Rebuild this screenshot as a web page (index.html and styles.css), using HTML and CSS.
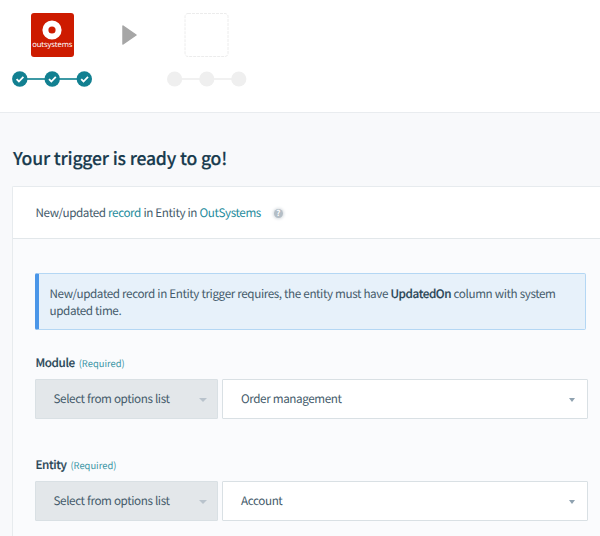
FILE: index.html
```html
<!DOCTYPE html>
<html lang="en">
<head>
<meta charset="utf-8">
<title>Trigger setup</title>
<link rel="stylesheet" href="styles.css">
</head>
<body>
<header class="steps">
  <div class="step">
    <div class="logo">
      <svg width="20" height="20" viewBox="0 0 20 20"><circle cx="10" cy="10" r="6.6" fill="none" stroke="#fff" stroke-width="6"/></svg>
      <span class="logo-name">outsystems</span>
    </div>
    <svg class="progress" width="80" height="16" viewBox="0 0 80 16">
      <path d="M8 8H72" stroke="#3d99a5" stroke-width="2"/>
      <g fill="#128091"><circle cx="7.8" cy="8" r="7.7"/><circle cx="40.2" cy="8" r="7.7"/><circle cx="72.3" cy="8" r="7.7"/></g>
      <path d="m4.6 8.2 2.3 2.3 4.5-4.7m25.6 2.4 2.3 2.3 4.5-4.7m25.4 2.4 2.3 2.3 4.5-4.7" fill="none" stroke="#fff" stroke-width="1.8"/>
    </svg>
  </div>
  <svg class="arrow" width="15" height="20" viewBox="0 0 15 20"><path d="M1 1 14 10 1 19Z" fill="#a6a6a6" stroke="#a6a6a6" stroke-linejoin="round" stroke-width="1.5"/></svg>
  <div class="step">
    <svg class="empty" width="46" height="46" viewBox="0 0 46 46"><rect x="1" y=".5" width="43" height="43" rx="3" fill="none" stroke="#ececec" stroke-dasharray="3 1"/></svg>
    <svg class="progress" width="80" height="16" viewBox="0 0 80 16">
      <path d="M8 8H72" stroke="#f1f1f1" stroke-width="2"/>
      <g fill="#efefef"><circle cx="7.6" cy="8" r="7.6"/><circle cx="39.8" cy="8" r="7.6"/><circle cx="71.8" cy="8" r="7.6"/></g>
    </svg>
  </div>
</header>
<main>
  <h1>Your trigger is ready to go!</h1>
  <section class="panel">
    <div class="panel-head">
      <span class="summary">New/updated <a>record</a> in Entity in <a>OutSystems</a></span>
      <span class="help">?</span>
    </div>
    <div class="panel-body">
      <div class="notice">New/updated record in Entity trigger requires, the entity must have <b>UpdatedOn</b> column with system<br>updated time.</div>
      <div class="field">
        <div class="label"><b>Module</b><span>(Required)</span></div>
        <div class="controls">
          <div class="select mode"><span>Select from options list</span><i></i></div>
          <div class="select value"><span>Order management</span><i></i></div>
        </div>
      </div>
      <div class="field">
        <div class="label"><b>Entity</b><span>(Required)</span></div>
        <div class="controls">
          <div class="select mode"><span>Select from options list</span><i></i></div>
          <div class="select value"><span>Account</span><i></i></div>
        </div>
      </div>
    </div>
  </section>
</main>
</body>
</html>
```
FILE: styles.css
```css
* { box-sizing: border-box; }
body {
  margin: 0;
  height: 536px;
  background: #f8f9fb;
  color: #455b6b;
  font: 11.7px/17px "Noto Sans CJK SC", "Open Sans", sans-serif;
  letter-spacing: -0.4px;
  word-spacing: 0.2px;
  text-rendering: geometricPrecision;
  white-space: nowrap;
}
.steps {
  display: flex;
  align-items: flex-start;
  height: 113px;
  padding: 13px 12px 0;
  background: #fff;
  border-bottom: 1px solid #e9ecef;
}
.step {
  display: flex;
  flex-direction: column;
  align-items: center;
  width: 80px;
}
.logo {
  display: flex;
  flex-direction: column;
  align-items: center;
  width: 43.5px;
  height: 43.5px;
  margin: 0 0 0.5px 0.5px;
  padding-top: 7px;
  background: #cd1b00;
  border-radius: 3px;
}
.logo-name {
  color: #fff;
  font: 7.7px/10px "Noto Sans", sans-serif;
  letter-spacing: -0.15px;
}
.progress { margin-top: 14px; }
.empty { margin-bottom: -2px; }
.arrow { margin: 12px 30px 0 30px; }
main { padding: 34px 0 0 12px; }
h1 {
  margin: 0 0 0 1px;
  color: #183b4e;
  font-size: 17.6px;
  line-height: 24px;
  font-weight: 500;
  letter-spacing: -0.22px;
  -webkit-text-stroke: 0.15px;
}
.panel {
  height: 350px;
  margin-top: 15px;
  background: #fafbfd;
  border: solid #e7ebee;
  border-width: 1px 0 0 1px;
  border-radius: 2px 0 0;
}
.panel-head {
  display: flex;
  align-items: center;
  height: 52px;
  padding-left: 22.5px;
  background: #fff;
  border-bottom: 1px solid #e2e7ea;
}
.summary { padding-bottom: 1px; }
.panel-head a { color: #258b9c; }
.help {
  width: 9px;
  height: 9px;
  margin: 2px 0 0 13px;
  border-radius: 50%;
  background: #b4bec6;
  box-shadow: 0 0 3px 1px #d8dde1;
  color: #fff;
  font-size: 8px;
  line-height: 9px;
  font-weight: 700;
  letter-spacing: 0;
  text-align: center;
}
.panel-body {
  width: 575px;
  padding: 34px 0 0 22px;
}
.notice {
  width: 551px;
  height: 57px;
  padding: 11px 0 0 10.5px;
  background: #e7f1fa;
  border: 1px solid #b4d7f4;
  border-left: 4px solid #4a96e8;
  border-radius: 2px;
}
b { color: #294556; font-weight: 500; -webkit-text-stroke: 0.15px; }
.field { height: 102px; padding-top: 24px; }
.label {
  display: flex;
  align-items: baseline;
  gap: 4px;
  height: 25px;
  padding-left: 0.5px;
}
.label span { color: #3b95a5; font-size: 9.4px; letter-spacing: 0; }
.controls { display: flex; gap: 4px; }
.select {
  display: flex;
  align-items: center;
  justify-content: space-between;
  height: 40px;
  padding: 0 12px 2px 18px;
  border: 1px solid #d9e0e4;
  border-radius: 1px;
}
.mode { width: 183px; background: #e3e7ea; padding-left: 17.5px; padding-right: 10px; }
.value { width: 366px; background: #fff; }
.select i {
  margin-top: 3px;
  border: 4.5px solid transparent;
  border-top-color: #b9c3cc;
  border-bottom: 0;
}
.value i { border-width: 4px 3.5px 0; border-top-color: #8fa2b0; }
```
